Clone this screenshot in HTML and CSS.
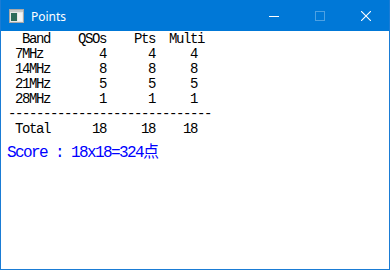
FILE: index.html
```html
<!DOCTYPE html>
<html lang="ja">
<head>
    <meta charset="UTF-8">
    <title>Points</title>
    <link rel="stylesheet" href="styles.css">
</head>
<body>
    <div class="window">
        <div class="title-bar">
            <svg class="app-icon" width="15" height="14" viewBox="0 0 15 14">
                <rect x="0.5" y="0.5" width="14" height="13" fill="#e8e8e8" stroke="#a8a8a8"/>
                <rect x="1" y="1" width="13" height="2" fill="#c8c8c8"/>
                <rect x="2" y="4" width="6" height="8" fill="#2e6b5a"/>
                <rect x="9" y="4" width="4" height="8" fill="#f4f4f4"/>
            </svg>
            <span class="title">Points</span>
            <div class="caption-btns">
                <div class="caption-btn">
                    <svg width="10" height="10" viewBox="0 0 10 10"><path d="M0 5.5h10" stroke="#fff" stroke-width="1"/></svg>
                </div>
                <div class="caption-btn disabled">
                    <svg width="10" height="10" viewBox="0 0 10 10"><rect x="0.5" y="0.5" width="9" height="9" fill="none" stroke="#fff" stroke-width="1"/></svg>
                </div>
                <div class="caption-btn">
                    <svg width="10" height="10" viewBox="0 0 10 10"><path d="M0 0L10 10M10 0L0 10" stroke="#fff" stroke-width="1.1"/></svg>
                </div>
            </div>
        </div>

        <div class="client">
<pre class="points-table">  Band    QSOs    Pts  Multi
 7MHz        4      4     4
 14MHz       8      8     8
 21MHz       5      5     5
 28MHz       1      1     1
-----------------------------
 Total      18     18    18</pre>
            <div class="score">Score : 18x18=324<span class="kanji">点</span></div>
        </div>
    </div>
</body>
</html>
```

FILE: styles.css
```css
* {
    margin: 0;
    padding: 0;
    box-sizing: border-box;
}

body {
    background: #ffffff;
}

.window {
    width: 390px;
    height: 270px;
    border: 1px solid #1a7cd5;
    border-top: none;
    display: flex;
    flex-direction: column;
    background: #ffffff;
}

/* Title bar */
.title-bar {
    height: 31px;
    background: #0078d7;
    display: flex;
    align-items: center;
    color: #ffffff;
}

.app-icon {
    margin-left: 8px;
    margin-top: 1px;
}

.title {
    margin-left: 7px;
    font-family: "Noto Sans", "Open Sans", sans-serif;
    font-size: 12px;
    margin-top: 1px;
}

.caption-btns {
    margin-left: auto;
    display: flex;
    height: 100%;
}

.caption-btn {
    width: 46px;
    height: 100%;
    display: flex;
    align-items: center;
    justify-content: center;
}

.caption-btn svg {
    display: block;
}

.caption-btn.disabled {
    opacity: 0.3;
}

/* Client area */
.client {
    flex: 1;
    padding: 1px 0 0 7px;
}

.points-table {
    font-family: "Liberation Mono", "DejaVu Sans Mono", monospace;
    font-size: 14px;
    letter-spacing: -1.4px;
    line-height: 15px;
    color: #000000;
}

.score {
    margin: 4px 0 0 -1px;
    font-family: "Liberation Mono", "Noto Sans CJK JP", monospace;
    font-size: 16px;
    letter-spacing: -1.6px;
    line-height: 18px;
    color: #0000ff;
}

.score .kanji {
    font-family: "Noto Sans CJK JP", sans-serif;
    font-size: 16px;
    letter-spacing: 0;
}
```
